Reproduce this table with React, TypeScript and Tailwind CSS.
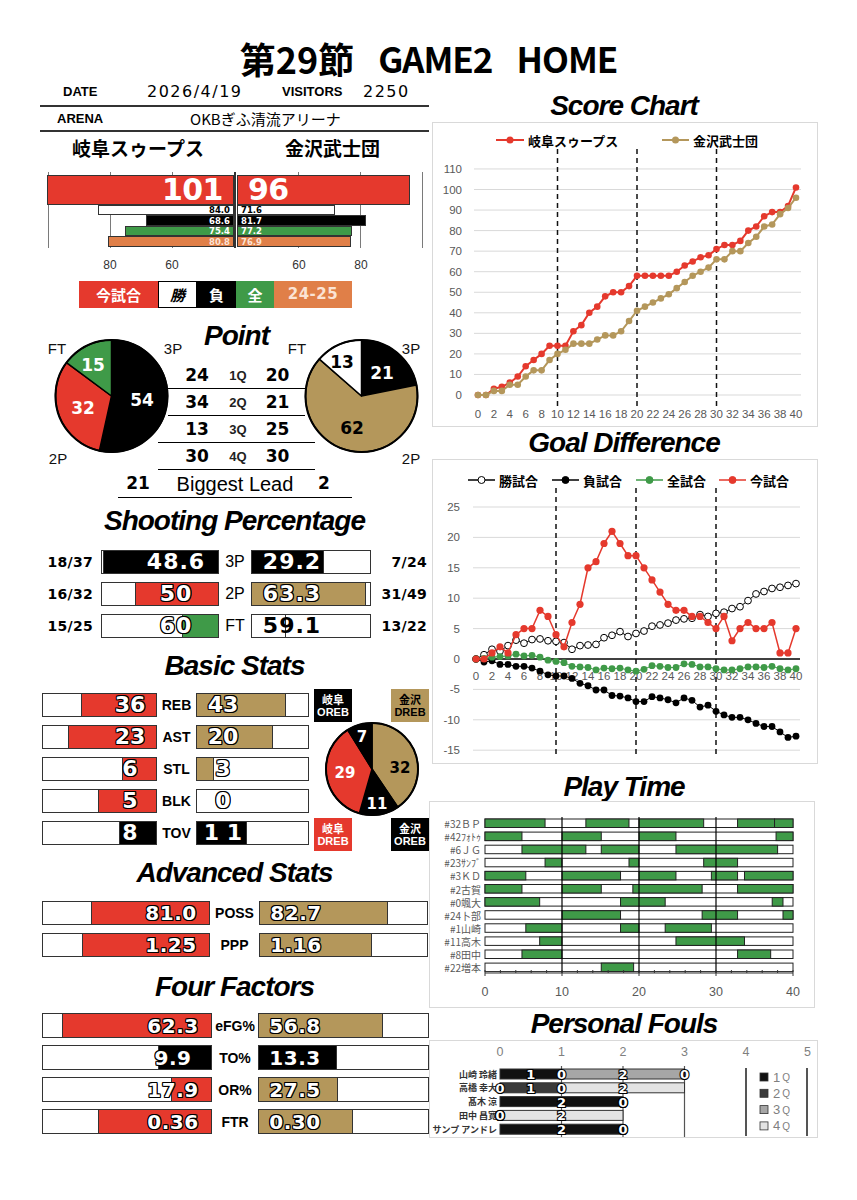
import React from "react";

const RED = "#e5392d";
const GOLD = "#b4975b";
const GREEN = "#3f9a48";

const OUT =
  "text-white [text-shadow:-1px_-1px_0_#000,1px_-1px_0_#000,-1px_1px_0_#000,1px_1px_0_#000,0_-1px_0_#000,0_1px_0_#000,-1px_0_0_#000,1px_0_0_#000]";
const NUM = "font-['DejaVu_Sans',sans-serif] font-bold";
const JP = "font-['Noto_Sans_CJK_JP',sans-serif]";
const TITLE = "font-['Liberation_Sans',sans-serif] font-bold italic text-[28px] tracking-[-1px] leading-none";

const gifu = [0, 0, 3, 4, 6, 9, 14, 17, 20, 24, 24, 24, 31, 34, 40, 43, 48, 50, 50, 53, 58, 58, 58, 58, 58, 60, 63, 65, 67, 68, 71, 73, 73, 75, 80, 82, 87, 89, 89, 92, 101];
const kanazawa = [0, 0, 2, 2, 5, 5, 9, 12, 12, 17, 20, 22, 25, 25, 25, 27, 29, 29, 31, 36, 41, 43, 45, 47, 49, 52, 55, 58, 60, 62, 66, 66, 70, 70, 74, 77, 82, 83, 88, 91, 96];
const winAvg = [0, 0.7, 1.6, 1.3, 2.2, 3.1, 2.6, 3.2, 3.3, 3.0, 2.9, 2.7, 1.6, 2.2, 2.3, 2.4, 3.5, 3.9, 4.5, 3.7, 4.2, 4.6, 5.4, 5.6, 5.9, 6.4, 6.6, 6.7, 7.3, 7.0, 7.5, 7.7, 8.3, 8.6, 9.6, 10.7, 11.1, 11.6, 11.8, 12.1, 12.4];
const lossAvg = [0, -0.5, -0.3, -0.9, -0.9, -1.2, -1.2, -1.5, -2.0, -2.6, -2.8, -2.8, -3.2, -4.0, -4.4, -5.1, -5.1, -6.0, -6.1, -6.4, -7.0, -7.0, -6.2, -6.4, -6.7, -7.2, -6.4, -6.8, -7.9, -7.6, -8.6, -9.2, -9.6, -9.6, -10.0, -10.6, -11.1, -11.1, -12.0, -12.9, -12.7];
const allAvg = [0, 0.1, 0.3, 0.4, 0.5, 0.8, 0.5, 0.6, 0.3, -0.2, -0.4, -0.6, -1.2, -1.3, -1.4, -1.8, -1.5, -1.6, -1.5, -1.8, -2.0, -1.7, -1.1, -1.2, -1.4, -1.4, -0.8, -0.9, -1.3, -1.3, -1.6, -1.8, -1.8, -1.6, -1.3, -1.3, -1.4, -1.2, -1.6, -1.8, -1.6];
const thisGame = gifu.map((v, i) => v - kanazawa[i]);

const playTime: [string, [number, number][]][] = [
  ["#32ＢＰ", [[0, 7.8], [13.1, 18.7], [20, 28.4], [32.8, 37.6], [37.6, 40]]],
  ["#42ﾌｫﾄｩ", [[0, 4.8], [10, 15.1], [20, 24.8], [37.8, 40]]],
  ["#6ＪＧ", [[4.8, 13.1], [15.1, 20], [24.8, 38]]],
  ["#23ｻﾝﾌﾞ", [[7.8, 10], [18.7, 20], [28.4, 32.8]]],
  ["#3ＫＤ", [[0, 5.3], [10, 17.6], [20, 24.8], [29.4, 32.8], [33.7, 40]]],
  ["#2古賀", [[0, 4.8], [10, 15.1], [19.2, 28.2], [32.8, 40]]],
  ["#0颯大", [[0, 7.1], [17.6, 23.4], [37.3, 38.7]]],
  ["#24卜部", [[10, 17.6], [28.2, 32.8], [38.7, 40]]],
  ["#1山崎", [[5.3, 10], [17.6, 20], [23.4, 29.4]]],
  ["#11高木", [[7.1, 10], [24.8, 33.7]]],
  ["#8田中", [[4.8, 10], [32.8, 37.1]]],
  ["#22増本", [[15.1, 19.3]]],
];

const fouls = [
  { name: "山崎 玲緒", q: [1, 0, 2, 0] },
  { name: "高橋 幸大", q: [0, 1, 0, 2] },
  { name: "髙木 涼", q: [2, 0, 0, 0] },
  { name: "田中 昌寛", q: [0, 0, 0, 2] },
  { name: "サンプ アンドレ", q: [2, 0, 0, 0] },
];
const qColors = ["#111111", "#3a3a3a", "#a6a6a6", "#e3e3e3"];

function slicePaths(vals: number[], cx: number, cy: number, r: number) {
  const total = vals.reduce((a, b) => a + b, 0);
  let acc = 0;
  return vals.map((v) => {
    const a0 = (acc / total) * Math.PI * 2;
    acc += v;
    const a1 = (acc / total) * Math.PI * 2;
    const x0 = cx + r * Math.sin(a0);
    const y0 = cy - r * Math.cos(a0);
    const x1 = cx + r * Math.sin(a1);
    const y1 = cy - r * Math.cos(a1);
    const large = a1 - a0 > Math.PI ? 1 : 0;
    return `M${cx},${cy} L${x0},${y0} A${r},${r} 0 ${large} 1 ${x1},${y1} Z`;
  });
}

type PieLabel = { x: number; y: number; t: string; c: string; size?: number };

function Pie({ w, h, cx, cy, r, vals, colors, labels, tags }: {
  w: number; h: number; cx: number; cy: number; r: number; vals: number[]; colors: string[]; labels: PieLabel[]; tags?: PieLabel[];
}) {
  const paths = slicePaths(vals, cx, cy, r);
  return (
    <svg width={w} height={h} className="block shrink-0 overflow-visible">
      {paths.map((d, i) => (
        <path key={i} d={d} fill={colors[i]} stroke="#000" strokeWidth="1.5" strokeLinejoin="round" />
      ))}
      <circle cx={cx} cy={cy} r={r} fill="none" stroke="#000" strokeWidth="2" />
      {labels.map((l) => (
        <text key={l.t + l.x} x={l.x} y={l.y} fill={l.c} fontSize={l.size ?? 17} fontWeight="700" fontFamily="DejaVu Sans, sans-serif" textAnchor="middle" dominantBaseline="central">
          {l.t}
        </text>
      ))}
      {tags?.map((l) => (
        <text key={l.t + l.x} x={l.x} y={l.y} fill="#111" fontSize="15" fontFamily="Liberation Sans, sans-serif" textAnchor="middle" dominantBaseline="central">
          {l.t}
        </text>
      ))}
    </svg>
  );
}

function StatBar({ side, box, fill, w, text, tc, tbox }: {
  side: "left" | "right"; box: string; fill: string; w: number; text: string; tc: string; tbox: string;
}) {
  const left = side === "left";
  return (
    <div className={`relative flex shrink-0 border-[1.5px] border-[#333] bg-white ${left ? "justify-end" : "justify-start"} ${box}`}>
      {w > 0 && (
        <div className={`h-full ${fill} ${left ? "border-l-[1.5px]" : "border-r-[1.5px]"} border-[#333]`} style={{ width: w }} />
      )}
      <span className={`absolute inset-y-0 flex items-center justify-center leading-none ${tbox} ${tc}`}>{text}</span>
    </div>
  );
}

function SectionTitle({ text, cls }: { text: string; cls: string }) {
  return <div className={`flex items-center justify-center ${TITLE} ${cls}`}>{text}</div>;
}

function ScoreBars() {
  const leftBars = [
    { w: 136, cls: "bg-white text-black", t: "84.0", h: "h-[10px]" },
    { w: 88, cls: "bg-black text-white", t: "68.6", h: "h-[11px]" },
    { w: 109, cls: "bg-[#3f9a48] text-white", t: "75.4", h: "h-[10px]" },
    { w: 126, cls: "bg-[#e07f48] text-[#fbe3d4]", t: "80.8", h: "h-[11px]" },
  ];
  const rightBars = [
    { w: 98, cls: "bg-white text-black", t: "71.6", h: "h-[10px]" },
    { w: 129, cls: "bg-black text-white", t: "81.7", h: "h-[11px]" },
    { w: 115, cls: "bg-[#3f9a48] text-white", t: "77.2", h: "h-[10px]" },
    { w: 114, cls: "bg-[#e07f48] text-[#fbe3d4]", t: "76.9", h: "h-[11px]" },
  ];
  return (
    <div className="mt-[10px] flex h-[76px]">
      <div className="relative flex w-[194px] flex-col items-end pt-[3px]">
        <div className="absolute inset-y-0 left-[8px] w-px bg-[#7a7a7a]" />
        <div className="absolute inset-y-0 left-[70px] w-px bg-[#7a7a7a]" />
        <div className="absolute inset-y-0 left-[132px] w-px bg-[#7a7a7a]" />
        <div className={`relative flex h-[30px] w-[187px] items-center justify-end border border-[#333] bg-[#e5392d] pr-[10px] text-[30px] leading-none tracking-[-0.5px] text-white ${NUM}`}>101</div>
        {leftBars.map((b) => (
          <div key={b.t} className={`relative flex items-center justify-end overflow-hidden border border-[#333] pr-[3px] text-[8.5px] leading-[8px] ${NUM} ${b.cls} ${b.h}`} style={{ width: b.w }}>
            {b.t}
          </div>
        ))}
      </div>
      <div className="w-[2px] bg-[#333]" />
      <div className="relative ml-px flex flex-1 flex-col items-start pt-[3px]">
        <div className="absolute inset-y-0 left-[61px] w-px bg-[#7a7a7a]" />
        <div className="absolute inset-y-0 left-[123px] w-px bg-[#7a7a7a]" />
        <div className="absolute inset-y-0 left-[185px] w-px bg-[#7a7a7a]" />
        <div className={`relative flex h-[30px] w-[173px] items-center justify-start border border-[#333] bg-[#e5392d] pl-[10px] text-[30px] leading-none tracking-[-0.5px] text-white ${NUM}`}>96</div>
        {rightBars.map((b) => (
          <div key={b.t} className={`relative flex items-center justify-start overflow-hidden border border-[#333] pl-[3px] text-[8.5px] leading-[8px] ${NUM} ${b.cls} ${b.h}`} style={{ width: b.w }}>
            {b.t}
          </div>
        ))}
      </div>
    </div>
  );
}

function PointSection() {
  const rows = [
    ["24", "1Q", "20", false],
    ["34", "2Q", "21", false],
    ["13", "3Q", "25", true],
    ["30", "4Q", "30", true],
  ] as const;
  return (
    <>
      <div className="mt-[10px] flex h-[152px]">
        <Pie
          w={128} h={152} cx={71.5} cy={78} r={56}
          vals={[54, 32, 15]} colors={["#000", RED, GREEN]}
          labels={[
            { x: 102, y: 82, t: "54", c: "#fff" },
            { x: 43, y: 90, t: "32", c: "#fff" },
            { x: 53, y: 47, t: "15", c: "#fff" },
          ]}
          tags={[
            { x: 17, y: 30, t: "FT", c: "" },
            { x: 133, y: 30, t: "3P", c: "" },
            { x: 18, y: 140, t: "2P", c: "" },
          ]}
        />
        <div className="flex w-[137px] flex-col">
          <SectionTitle text="Point" cls="h-[44px] pb-[8px]" />
          {rows.map(([a, q, b, wide]) => (
            <div
              key={q}
              className={`grid h-[27px] grid-cols-[58px_24px_55px] items-center border-b-[1.5px] border-black leading-none ${wide ? "-mx-[10px] px-[10px]" : ""}`}
            >
              <span className={`text-center text-[17px] ${NUM}`}>{a}</span>
              <span className="text-center text-[13px] font-bold text-[#222]">{q}</span>
              <span className={`text-center text-[17px] ${NUM}`}>{b}</span>
            </div>
          ))}
        </div>
        <Pie
          w={124} h={152} cx={56.5} cy={78} r={56}
          vals={[21, 62, 13]} colors={["#000", GOLD, "#fff"]}
          labels={[
            { x: 77, y: 55, t: "21", c: "#fff" },
            { x: 47, y: 110, t: "62", c: "#000" },
            { x: 37, y: 44, t: "13", c: "#000" },
          ]}
          tags={[
            { x: -8, y: 30, t: "FT", c: "" },
            { x: 106, y: 30, t: "3P", c: "" },
            { x: 106, y: 140, t: "2P", c: "" },
          ]}
        />
      </div>
      <div className="ml-[78px] flex h-[28px] w-[234px] items-center border-b-[1.5px] border-black leading-none">
        <span className={`w-[40px] text-center text-[17px] ${NUM}`}>21</span>
        <span className="w-[154px] text-center text-[20px]">Biggest Lead</span>
        <span className={`w-[24px] text-center text-[17px] ${NUM}`}>2</span>
      </div>
    </>
  );
}

function Shooting() {
  const rows = [
    { lf: "18/37", rf: "7/24", label: "3P", l: { fill: "bg-black", w: 115, t: "48.6", tc: "text-white" }, r: { fill: "bg-black", w: 72, t: "29.2", tc: "text-white" } },
    { lf: "16/32", rf: "31/49", label: "2P", l: { fill: "bg-[#e5392d]", w: 83, t: "50", tc: OUT }, r: { fill: "bg-[#b4975b]", w: 114, t: "63.3", tc: OUT } },
    { lf: "15/25", rf: "13/22", label: "FT", l: { fill: "bg-[#3f9a48]", w: 36, t: "60", tc: OUT }, r: { fill: "bg-white", w: 34, t: "59.1", tc: "text-black" } },
  ];
  return (
    <div className="mt-[12px] flex flex-col gap-[8px]">
      {rows.map((row) => (
        <div key={row.label} className="flex h-[24px] items-center">
          <span className={`w-[61px] pr-[8px] text-right text-[14px] leading-none tracking-[0.3px] ${NUM}`}>{row.lf}</span>
          <StatBar side="left" box="h-[24px] w-[118px]" fill={row.l.fill} w={row.l.w} text={row.l.t} tc={`text-[22px] tracking-[1px] ${NUM} ${row.l.tc}`} tbox="right-[2px] w-[80px]" />
          <span className="w-[32px] text-center text-[16px] leading-none">{row.label}</span>
          <StatBar side="right" box="h-[24px] w-[120px]" fill={row.r.fill} w={row.r.w} text={row.r.t} tc={`text-[22px] tracking-[1px] ${NUM} ${row.r.tc}`} tbox="left-0 w-[80px]" />
          <span className={`flex-1 pr-[2px] text-right text-[14px] leading-none tracking-[0.3px] ${NUM}`}>{row.rf}</span>
        </div>
      ))}
    </div>
  );
}

function Tag({ top, bottom, cls }: { top: string; bottom: string; cls: string }) {
  return (
    <div className={`flex h-[33px] w-[38px] flex-col items-center justify-center text-[11px] font-bold leading-[13px] ${cls}`}>
      <span className={JP}>{top}</span>
      <span>{bottom}</span>
    </div>
  );
}

function BasicStats() {
  const rows = [
    { label: "REB", l: { fill: "bg-[#e5392d]", w: 75, t: "36", tc: OUT }, r: { fill: "bg-[#b4975b]", w: 89, t: "43", tc: OUT } },
    { label: "AST", l: { fill: "bg-[#e5392d]", w: 88, t: "23", tc: OUT }, r: { fill: "bg-[#b4975b]", w: 76, t: "20", tc: OUT } },
    { label: "STL", l: { fill: "bg-[#e5392d]", w: 34, t: "6", tc: OUT }, r: { fill: "bg-[#b4975b]", w: 17, t: "3", tc: OUT } },
    { label: "BLK", l: { fill: "bg-[#e5392d]", w: 58, t: "5", tc: OUT }, r: { fill: "bg-[#b4975b]", w: 0, t: "0", tc: OUT } },
    { label: "TOV", l: { fill: "bg-black", w: 37, t: "8", tc: "text-white" }, r: { fill: "bg-black", w: 50, t: "1 1", tc: "text-white" } },
  ];
  return (
    <div className="mt-[7px] flex">
      <div className="ml-[2px] flex flex-col gap-[8px] pt-[4px]">
        {rows.map((row) => (
          <div key={row.label} className="flex h-[24px] items-center">
            <StatBar side="left" box="h-[24px] w-[115px]" fill={row.l.fill} w={row.l.w} text={row.l.t} tc={`text-[22px] ${NUM} ${row.l.tc}`} tbox="right-0 w-[52px]" />
            <span className="w-[39px] text-center text-[14px] font-bold leading-none">{row.label}</span>
            <StatBar side="right" box="h-[24px] w-[113px]" fill={row.r.fill} w={row.r.w} text={row.r.t} tc={`text-[22px] ${NUM} ${row.r.tc}`} tbox="left-0 w-[52px]" />
          </div>
        ))}
      </div>
      <div className="ml-[5px] flex h-[161px] w-[116px] flex-col">
        <div className="flex justify-between">
          <Tag top="岐阜" bottom="OREB" cls="bg-black text-white" />
          <Tag top="金沢" bottom="DREB" cls="bg-[#b4975b] text-black" />
        </div>
        <div className="-mt-px flex h-[96px] justify-center">
          <Pie
            w={96} h={96} cx={48} cy={48} r={46}
            vals={[32, 11, 29, 7]} colors={[GOLD, "#000", RED, "#000"]}
            labels={[
              { x: 38, y: 16, t: "7", c: "#fff", size: 15 },
              { x: 76, y: 47, t: "32", c: "#000", size: 15 },
              { x: 53, y: 83, t: "11", c: "#fff", size: 15 },
              { x: 21, y: 52, t: "29", c: "#fff", size: 15 },
            ]}
          />
        </div>
        <div className="mt-px flex justify-between">
          <Tag top="岐阜" bottom="DREB" cls="bg-[#e5392d] text-white" />
          <Tag top="金沢" bottom="OREB" cls="bg-black text-white" />
        </div>
      </div>
    </div>
  );
}

type Row4 = { label: string; l: { fill: string; w: number; t: string }; r: { fill: string; w: number; t: string } };

function WideRows({ rows, lw, mid, rw, h, gap }: { rows: Row4[]; lw: string; mid: string; rw: string; h: string; gap: string }) {
  return (
    <div className={`ml-[2px] flex flex-col ${gap}`}>
      {rows.map((row) => (
        <div key={row.label} className={`flex items-center ${h}`}>
          <StatBar side="left" box={`${h} ${lw}`} fill={row.l.fill} w={row.l.w} text={row.l.t} tc={`text-[20px] tracking-[0.5px] ${NUM} ${OUT}`} tbox="right-0 w-[76px]" />
          <span className={`${mid} text-center text-[14px] font-bold leading-none`}>{row.label}</span>
          <StatBar side="right" box={`${h} ${rw}`} fill={row.r.fill} w={row.r.w} text={row.r.t} tc={`text-[20px] tracking-[0.5px] ${NUM} ${OUT}`} tbox="left-0 w-[72px]" />
        </div>
      ))}
    </div>
  );
}

function ScoreChart() {
  const X = (i: number) => 45 + i * 7.95;
  const Y = (v: number) => 272 - v * 2.055;
  const line = (arr: number[]) => arr.map((v, i) => `${X(i)},${Y(v)}`).join(" ");
  const font = "Liberation Sans, sans-serif";
  return (
    <svg width="384" height="303" className="block">
      <line x1="63" y1="17" x2="91" y2="17" stroke={RED} strokeWidth="2" />
      <circle cx="77" cy="17" r="3.5" fill={RED} />
      <text x="95" y="17" dominantBaseline="central" fontSize="13" fontWeight="700" fontFamily="Noto Sans CJK JP, sans-serif">岐阜スゥープス</text>
      <line x1="229" y1="17" x2="256" y2="17" stroke={GOLD} strokeWidth="2" />
      <circle cx="242.5" cy="17" r="3.5" fill={GOLD} />
      <text x="260" y="17" dominantBaseline="central" fontSize="13" fontWeight="700" fontFamily="Noto Sans CJK JP, sans-serif">金沢武士団</text>
      {Array.from({ length: 12 }, (_, k) => k * 10).map((v) => (
        <g key={v}>
          <line x1="41" x2="368" y1={Y(v)} y2={Y(v)} stroke="#d9d9d9" strokeWidth="1" />
          <text x="29" y={Y(v)} textAnchor="end" dominantBaseline="central" fontSize="11.5" fill="#595959" fontFamily={font}>{v}</text>
        </g>
      ))}
      {Array.from({ length: 21 }, (_, k) => k * 2).map((m) => (
        <text key={m} x={X(m)} y="291" textAnchor="middle" dominantBaseline="central" fontSize="11.5" fill="#595959" fontFamily={font}>{m}</text>
      ))}
      {[10, 20, 30].map((m) => (
        <line key={m} x1={X(m)} x2={X(m)} y1="26" y2="286" stroke="#111" strokeWidth="1.5" strokeDasharray="5 4" />
      ))}
      <polyline points={line(gifu)} fill="none" stroke={RED} strokeWidth="2" />
      {gifu.map((v, i) => <circle key={i} cx={X(i)} cy={Y(v)} r="3.3" fill={RED} />)}
      <polyline points={line(kanazawa)} fill="none" stroke={GOLD} strokeWidth="2" />
      {kanazawa.map((v, i) => <circle key={i} cx={X(i)} cy={Y(v)} r="3.3" fill={GOLD} />)}
    </svg>
  );
}

function GoalChart() {
  const X = (i: number) => 43 + i * 8;
  const Y = (v: number) => 199 - v * 6.08;
  const line = (arr: number[]) => arr.map((v, i) => `${X(i)},${Y(v)}`).join(" ");
  const font = "Liberation Sans, sans-serif";
  const jp = "Noto Sans CJK JP, sans-serif";
  const legend = [
    { x: 35, t: "勝試合", stroke: "#000", fill: "#fff" },
    { x: 119, t: "負試合", stroke: "#000", fill: "#000" },
    { x: 203, t: "全試合", stroke: GREEN, fill: GREEN },
    { x: 286, t: "今試合", stroke: RED, fill: RED },
  ];
  return (
    <svg width="384" height="303" className="block">
      {legend.map((l) => (
        <g key={l.t}>
          <line x1={l.x} x2={l.x + 27} y1="20" y2="20" stroke={l.stroke} strokeWidth="1.5" />
          <circle cx={l.x + 13.5} cy="20" r="3.5" fill={l.fill} stroke={l.stroke} strokeWidth="1" />
          <text x={l.x + 31} y="20" dominantBaseline="central" fontSize="13" fontWeight="700" fontFamily={jp}>{l.t}</text>
        </g>
      ))}
      {[25, 20, 15, 10, 5, 0, -5, -10, -15].map((v) => (
        <g key={v}>
          <line x1="40" x2="367" y1={Y(v)} y2={Y(v)} stroke={v === 0 ? "#000" : "#d9d9d9"} strokeWidth={v === 0 ? 1.5 : 1} />
          <text x="27" y={Y(v)} textAnchor="end" dominantBaseline="central" fontSize="11.5" fill="#595959" fontFamily={font}>{v}</text>
        </g>
      ))}
      {Array.from({ length: 21 }, (_, k) => k * 2).map((m) => (
        <text key={m} x={X(m)} y="216" textAnchor="middle" dominantBaseline="central" fontSize="11.5" fill="#595959" fontFamily={font}>{m}</text>
      ))}
      {[10, 20, 30].map((m) => (
        <line key={m} x1={X(m)} x2={X(m)} y1="28" y2="296" stroke="#111" strokeWidth="1.5" strokeDasharray="5 4" />
      ))}
      <polyline points={line(winAvg)} fill="none" stroke="#000" strokeWidth="1" />
      {winAvg.map((v, i) => <circle key={i} cx={X(i)} cy={Y(v)} r="3.4" fill="#fff" stroke="#000" strokeWidth="1" />)}
      <polyline points={line(lossAvg)} fill="none" stroke="#000" strokeWidth="1" />
      {lossAvg.map((v, i) => <circle key={i} cx={X(i)} cy={Y(v)} r="3.4" fill="#000" />)}
      <polyline points={line(allAvg)} fill="none" stroke={GREEN} strokeWidth="1" />
      {allAvg.map((v, i) => <circle key={i} cx={X(i)} cy={Y(v)} r="3.4" fill={GREEN} />)}
      <polyline points={line(thisGame)} fill="none" stroke={RED} strokeWidth="1.5" />
      {thisGame.map((v, i) => <circle key={i} cx={X(i)} cy={Y(v)} r="3.6" fill={RED} />)}
    </svg>
  );
}

function PlayTimeChart() {
  const X = (m: number) => 55 + m * 7.7;
  return (
    <svg width="384" height="205" className="block">
      {playTime.map(([name, segs], i) => {
        const y = 17 + i * 13.1;
        return (
          <g key={name}>
            <text x="51" y={y + 4.5} textAnchor="end" dominantBaseline="central" fontSize="10" fill="#595959" fontFamily="Noto Sans CJK JP, sans-serif">{name}</text>
            <rect x={X(0)} y={y} width={X(40) - X(0)} height="8.5" fill="#fff" stroke="#222" strokeWidth="1" />
            {segs.map(([a, b]) => (
              <rect key={a} x={X(a)} y={y} width={(b - a) * 7.7} height="8.5" fill={GREEN} stroke="#222" strokeWidth="1" />
            ))}
          </g>
        );
      })}
      {[10, 20, 30].map((m) => (
        <line key={m} x1={X(m)} x2={X(m)} y1="15" y2="171" stroke="#000" strokeWidth="1.2" />
      ))}
      <line x1={X(0)} x2={X(40)} y1="171" y2="171" stroke="#333" strokeWidth="1" />
      {Array.from({ length: 21 }, (_, k) => k * 2).map((m) => (
        <line key={m} x1={X(m)} x2={X(m)} y1="168" y2={m % 10 === 0 ? 174 : 171} stroke="#333" strokeWidth="1" />
      ))}
      {[0, 10, 20, 30, 40].map((m) => (
        <text key={m} x={X(m)} y="190" textAnchor="middle" dominantBaseline="central" fontSize="12.5" fill="#595959" fontFamily="Liberation Sans, sans-serif">{m}</text>
      ))}
    </svg>
  );
}

function FoulsChart() {
  const X = (v: number) => 70 + v * 61.5;
  return (
    <svg width="387" height="96" className="block overflow-visible">
      {[0, 1, 2, 3, 4, 5].map((v) => (
        <text key={v} x={X(v)} y="11" textAnchor="middle" dominantBaseline="central" fontSize="12.5" fill="#7f7f7f" fontFamily="Liberation Sans, sans-serif">{v}</text>
      ))}
      {[1, 2, 3].map((v) => (
        <line key={v} x1={X(v)} x2={X(v)} y1="25" y2="96" stroke="#555" strokeWidth="1.2" />
      ))}
      {fouls.map((f, i) => {
        const y = 28 + i * 13.8;
        let acc = 0;
        const segs = f.q.map((v, k) => {
          const s = { a: acc, v, k };
          acc += v;
          return s;
        });
        return (
          <g key={f.name}>
            <text x="67" y={y + 5} textAnchor="end" dominantBaseline="central" fontSize="9" fontWeight="700" fill="#333" fontFamily="Noto Sans CJK JP, sans-serif">{f.name}</text>
            {segs.filter((s) => s.v > 0).map((s) => (
              <rect key={s.k} x={X(s.a)} y={y} width={s.v * 61.5} height="10" fill={qColors[s.k]} stroke="#333" strokeWidth="1" />
            ))}
            {segs.map((s) => (
              <text key={`t${s.k}`} x={X(s.a + s.v / 2)} y={y + 5.5} textAnchor="middle" dominantBaseline="central" fontSize="13" fontWeight="700" fill="#fff" stroke="#000" strokeWidth="2.2" paintOrder="stroke" fontFamily="DejaVu Sans, sans-serif">{s.v}</text>
            ))}
          </g>
        );
      })}
      <line x1="316" x2="316" y1="27" y2="95" stroke="#555" strokeWidth="2" />
      <line x1="377" x2="377" y1="27" y2="95" stroke="#555" strokeWidth="2" />
      {qColors.map((c, k) => {
        const y = 36 + k * 16.3;
        return (
          <g key={c}>
            <rect x="330" y={y - 4} width="8" height="8" fill={c} stroke="#333" strokeWidth="0.8" />
            <text x="343" y={y} dominantBaseline="central" fontSize="13" fill="#7f7f7f" fontFamily="Liberation Sans, sans-serif">
              {k + 1}
              <tspan dx="2" fontSize="10">Q</tspan>
            </text>
          </g>
        );
      })}
    </svg>
  );
}

export default function App() {
  const advanced: Row4[] = [
    { label: "POSS", l: { fill: "bg-[#e5392d]", w: 118, t: "81.0" }, r: { fill: "bg-[#b4975b]", w: 128, t: "82.7" } },
    { label: "PPP", l: { fill: "bg-[#e5392d]", w: 127, t: "1.25" }, r: { fill: "bg-[#b4975b]", w: 112, t: "1.16" } },
  ];
  const four: Row4[] = [
    { label: "eFG%", l: { fill: "bg-[#e5392d]", w: 149, t: "62.3" }, r: { fill: "bg-[#b4975b]", w: 124, t: "56.8" } },
    { label: "TO%", l: { fill: "bg-black", w: 53, t: "9.9" }, r: { fill: "bg-black", w: 78, t: "13.3" } },
    { label: "OR%", l: { fill: "bg-[#e5392d]", w: 40, t: "17.9" }, r: { fill: "bg-[#b4975b]", w: 79, t: "27.5" } },
    { label: "FTR", l: { fill: "bg-[#e5392d]", w: 113, t: "0.36" }, r: { fill: "bg-[#b4975b]", w: 94, t: "0.30" } },
  ];

  return (
    <div className="relative h-[1200px] w-[857px] overflow-hidden bg-white font-['Liberation_Sans','Noto_Sans_CJK_JP',sans-serif] text-black">
      {/* 見出し */}
      <div className="flex h-[80px] justify-center gap-[24px] pt-[38px] text-[36px] font-bold leading-[40px]">
        <span className={JP}>第29節</span>
        <span className={`${JP} text-[35px] tracking-[-1px]`}>GAME2</span>
        <span className={`${JP} text-[35px] tracking-[-1px]`}>HOME</span>
      </div>

      <div className="flex">
        {/* 左カラム */}
        <div className="ml-[40px] flex w-[389px] flex-col">
          <div className="flex h-[27px] items-center border-b-2 border-[#333] pb-[2px] leading-none">
            <span className="ml-[23px] w-[84px] text-[13px] font-bold">DATE</span>
            <span className="w-[135px] font-['DejaVu_Sans',sans-serif] text-[16px] tracking-[1.5px]">2026/4/19</span>
            <span className="w-[81px] text-[13px] font-bold">VISITORS</span>
            <span className="font-['DejaVu_Sans',sans-serif] text-[16px] tracking-[1.5px]">2250</span>
          </div>
          <div className="flex h-[25px] items-center border-b-2 border-[#333] leading-none">
            <span className="ml-[17px] w-[133px] text-[13px] font-bold">ARENA</span>
            <span className={`${JP} text-[15px]`}>OKBぎふ清流アリーナ</span>
          </div>
          <div className={`flex h-[30px] items-center text-[19px] font-bold leading-none ${JP}`}>
            <span className="w-[196px] text-center">岐阜スゥープス</span>
            <span className="w-[193px] text-center">金沢武士団</span>
          </div>

          <ScoreBars />

          <div className="mt-[9px] grid h-[16px] grid-cols-[55px_30px_32px_30px_97px_30px_32px_30px] items-center text-center text-[12px] leading-none text-[#333]">
            <span className="col-start-2">80</span>
            <span className="col-start-4">60</span>
            <span className="col-start-6">60</span>
            <span className="col-start-8">80</span>
          </div>

          <div className="ml-[39px] mt-[8px] flex h-[27px] text-[15px] font-bold leading-none text-white">
            <span className={`flex w-[79px] items-center justify-center bg-[#e5392d] ${JP}`}>今試合</span>
            <span className={`flex w-[39px] items-center justify-center border-[1.5px] border-black bg-white italic text-black ${JP}`}>勝</span>
            <span className={`flex w-[39px] items-center justify-center bg-black ${JP}`}>負</span>
            <span className={`flex w-[38px] items-center justify-center bg-[#3f9a48] ${JP}`}>全</span>
            <span className={`flex w-[78px] items-center justify-center bg-[#e07f48] tracking-[0.5px] ${NUM} text-[#fbe3d4]`}>24-25</span>
          </div>

          <PointSection />

          <SectionTitle text="Shooting Percentage" cls="mt-[6px] h-[34px]" />
          <Shooting />

          <SectionTitle text="Basic Stats" cls="mt-[12px] h-[32px]" />
          <BasicStats />

          <SectionTitle text="Advanced Stats" cls="mt-[7px] h-[32px]" />
          <div className="mt-[12px]">
            <WideRows rows={advanced} lw="w-[168px]" mid="w-[49px]" rw="w-[169px]" h="h-[24px]" gap="gap-[8px]" />
          </div>

          <SectionTitle text="Four Factors" cls="mt-[14px] h-[32px]" />
          <div className="mt-[10px]">
            <WideRows rows={four} lw="w-[170px]" mid="w-[47px]" rw="w-[171px]" h="h-[25px]" gap="gap-[7px]" />
          </div>
        </div>

        {/* 右カラム */}
        <div className="flex w-[390px] flex-col pt-[10px]">
          <SectionTitle text="Score Chart" cls="h-[32px]" />
          <div className="ml-[3px] h-[305px] w-[386px] border border-[#d9d9d9]">
            <ScoreChart />
          </div>

          <SectionTitle text="Goal Difference" cls="h-[32px]" />
          <div className="ml-[3px] h-[305px] w-[386px] border border-[#d9d9d9]">
            <GoalChart />
          </div>

          <SectionTitle text="Play Time" cls="h-[37px] pt-[9px]" />
          <div className="h-[207px] w-[386px] border border-[#d9d9d9]">
            <PlayTimeChart />
          </div>

          <SectionTitle text="Personal Fouls" cls="h-[32px]" />
          <div className="h-[98px] w-[389px] border border-[#d9d9d9]">
            <FoulsChart />
          </div>
        </div>
      </div>
    </div>
  );
}
